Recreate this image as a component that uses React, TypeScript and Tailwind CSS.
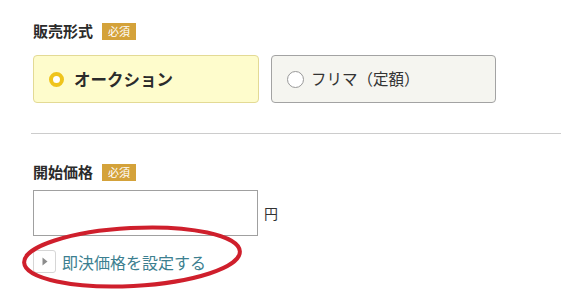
const font = { fontFamily: '"Noto Sans CJK JP", "Noto Sans", sans-serif' };

function Label({ text }: { text: string }) {
  return (
    <div className="flex h-[20px] items-center gap-[9px]">
      <span className="text-[15px] font-bold leading-[20px] text-[#2b2b2b]">{text}</span>
      <span className="h-[17px] w-[34px] bg-[#d4a23a] text-center text-[11px] leading-[17px] text-white">
        必須
      </span>
    </div>
  );
}

export default function App() {
  return (
    <div className="relative h-[295px] w-[561px] overflow-hidden bg-white pl-[33px] pt-[21px]" style={font}>
      <Label text="販売形式" />

      <div className="mt-[14px] flex gap-[12px]">
        <div className="flex h-[48px] w-[226px] items-center rounded-[4px] border border-[#e3da95] bg-[#fefccc] pl-[15px]">
          <span className="h-[15px] w-[15px] rounded-full border-[4px] border-[#efc41c] bg-white" />
          <span className="ml-[10px] text-[16.5px] font-bold text-[#2b2b2b]">オークション</span>
        </div>
        <div className="flex h-[48px] w-[225px] items-center rounded-[4px] border border-[#a3a3a3] bg-[#f5f5f0] pl-[15px]">
          <span className="h-[17px] w-[17px] rounded-full border border-[#999999] bg-white" />
          <span className="ml-[7px] text-[15.5px] text-[#333333]">フリマ（定額）</span>
        </div>
      </div>

      <div className="ml-[-2px] mt-[30px] border-t border-[#cccccc]" />

      <div className="mt-[28px]">
        <Label text="開始価格" />
      </div>

      <div className="mt-[8px] flex items-center gap-[6px]">
        <input className="h-[46px] w-[225px] border border-[#a0a0a0] bg-white px-2 outline-none" />
        <span className="text-[14px] text-[#333333]">円</span>
      </div>

      <div className="mt-[14px] flex h-[23px] items-center">
        <span className="flex h-[23px] w-[23px] items-center justify-center rounded-[3px] border border-[#d6d6d6] bg-white">
          <svg width="6" height="9" viewBox="0 0 6 9">
            <path d="M0.5 0.5 L5.5 4.5 L0.5 8.5 Z" fill="#8c8c8c" />
          </svg>
        </span>
        <span className="ml-[6px] text-[16px] text-[#3c7f90]">即決価格を設定する</span>
      </div>

      <svg className="pointer-events-none absolute left-0 top-0" width="561" height="295" viewBox="0 0 561 295">
        <ellipse
          cx="132"
          cy="257"
          rx="108"
          ry="29"
          transform="rotate(-3 132 257)"
          fill="none"
          stroke="#cf1f2c"
          strokeWidth="4"
        />
      </svg>
    </div>
  );
}
